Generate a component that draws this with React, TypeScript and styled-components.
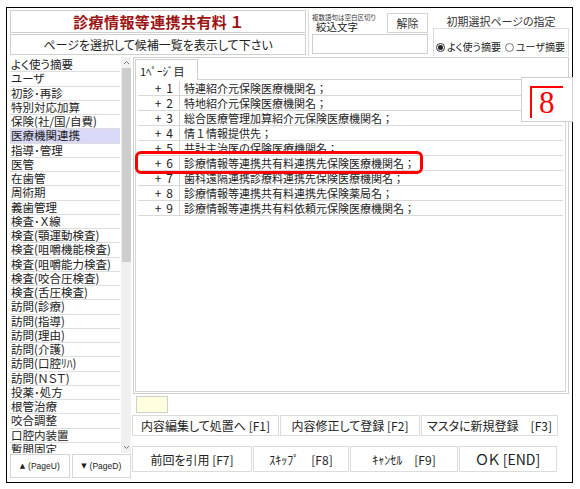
import React from 'react';
import styled, { createGlobalStyle } from 'styled-components';

const GlobalStyle = createGlobalStyle`
  html, body { margin: 0; padding: 0; background: #fff; }
  body {
    font-family: "Noto Sans CJK JP", "Noto Sans", sans-serif;
    color: #222;
    font-feature-settings: "palt";
  }
  * { box-sizing: border-box; }
`;

const Window = styled.div`
  margin: 7px 0 0 6px;
  width: 567px;
  height: 476px;
  border: 1px solid #000;
  padding: 2px 3px 0 3px;
  display: flex;
  flex-direction: column;
  gap: 1px;
`;

const TopArea = styled.div`
  display: flex;
  height: 46px;
`;

const TitleCol = styled.div`
  width: 296px;
  display: flex;
  flex-direction: column;
  gap: 1px;
`;

const TitleBox = styled.div`
  height: 23px;
  border: 1px solid #cfcfcf;
  display: flex;
  align-items: center;
  justify-content: center;
  font-size: 15px;
  font-weight: bold;
  color: #9c1414;
  letter-spacing: 0.4px;
`;

const SubBox = styled.div`
  height: 21px;
  border: 1px solid #cfcfcf;
  display: flex;
  align-items: center;
  justify-content: center;
  font-size: 12px;
`;

const FilterGroup = styled.div`
  width: 120px;
  margin-left: 2px;
  display: flex;
  flex-direction: column;
  gap: 1px;
  border-left: 1px solid #dcdcdc;
  padding-top: 3px;
`;

const FilterHead = styled.div`
  display: flex;
  height: 20px;
`;

const FilterLabels = styled.div`
  flex: 1;
  display: flex;
  flex-direction: column;
  padding-left: 3px;
  overflow: hidden;
`;

const Hint = styled.span`
  font-size: 6.5px;
  line-height: 8px;
  color: #333;
  white-space: nowrap;
`;

const FilterLabel = styled.span`
  font-size: 10.5px;
  line-height: 12px;
  padding-left: 4px;
  white-space: nowrap;
`;

const ClearButton = styled.div`
  width: 41px;
  border: 1px solid #d4d4d4;
  display: flex;
  align-items: center;
  justify-content: center;
  font-size: 11px;
  color: #333;
`;

const FilterInput = styled.div`
  height: 20px;
  margin-left: 3px;
  border: 1px solid #cfcfcf;
  background: #fff;
`;

const InitCol = styled.div`
  flex: 1;
  margin-left: 5px;
  display: flex;
  flex-direction: column;
`;

const InitLabel = styled.div`
  height: 18px;
  padding-top: 5px;
  text-align: center;
  font-size: 11px;
  line-height: 12px;
  color: #333;
`;

const RadioBox = styled.div`
  flex: 1;
  border: 1px solid #dcdcdc;
  border-bottom: none;
  display: flex;
  align-items: flex-end;
  padding: 0 0 3px 2px;
  gap: 4px;
  font-size: 10px;
  line-height: 12px;
  white-space: nowrap;
`;

const RadioItem = styled.label`
  display: flex;
  align-items: center;
  gap: 2px;
`;

const RadioDot = styled.span<{ $on?: boolean }>`
  flex: 0 0 9px;
  width: 9px;
  height: 9px;
  border-radius: 50%;
  border: 1px solid ${p => (p.$on ? '#333' : '#777')};
  display: inline-flex;
  align-items: center;
  justify-content: center;
  &::after {
    content: '';
    width: 5px;
    height: 5px;
    border-radius: 50%;
    background: ${p => (p.$on ? '#222' : 'transparent')};
  }
`;

const Main = styled.div`
  flex: 1;
  display: flex;
  gap: 2px;
`;

const LeftCol = styled.div`
  width: 121px;
  display: flex;
  flex-direction: column;
`;

const ListBox = styled.div`
  height: 396px;
  display: flex;
  overflow: hidden;
`;

const Items = styled.div`
  width: 110px;
  display: flex;
  flex-direction: column;
  padding-top: 1px;
`;

const Item = styled.div<{ $selected?: boolean }>`
  flex: 0 0 14.26px;
  height: 14.26px;
  line-height: 13px;
  font-size: 11.5px;
  padding-left: 1px;
  white-space: nowrap;
  border-bottom: 1px solid #dedede;
  background: ${p => (p.$selected ? '#d9d9f7' : '#fff')};
`;

const ScrollBar = styled.div`
  width: 10px;
  margin-left: 1px;
  background: #f0f0f0;
  display: flex;
  flex-direction: column;
  align-items: center;
`;

const ScrollArrow = styled.div`
  height: 11px;
  display: flex;
  align-items: center;
  justify-content: center;
`;

const Thumb = styled.div`
  width: 9px;
  height: 194px;
  background: #cdcdcd;
`;

const ScrollRest = styled.div`
  flex: 1;
`;

const PageRow = styled.div`
  margin-top: 1px;
  height: 24px;
  display: flex;
  gap: 2px;
`;

const PageButton = styled.div`
  flex: 1;
  min-width: 0;
  border: 1px solid #d8d8d8;
  display: flex;
  align-items: center;
  justify-content: center;
  font-family: "Liberation Sans", "DejaVu Sans", sans-serif;
  font-size: 8.5px;
  color: #222;
  gap: 3px;
  white-space: nowrap;
`;

const Arrow = styled.span`
  font-family: "DejaVu Sans", sans-serif;
  font-size: 7px;
`;

const RightCol = styled.div`
  flex: 1;
  display: flex;
  flex-direction: column;
`;

const TabFrame = styled.div`
  position: relative;
  height: 337px;
  border: 1px solid #cfcfcf;
  padding: 0 2px 1px 1px;
  display: flex;
  flex-direction: column;
`;

const TabStrip = styled.div`
  height: 21px;
  display: flex;
  align-items: flex-end;
`;

const Tab = styled.div`
  width: 63px;
  height: 21px;
  border: 1px solid #cfcfcf;
  border-bottom: none;
  background: #fff;
  font-size: 11px;
  padding: 3px 0 0 4px;
  margin-bottom: -1px;
  position: relative;
  z-index: 1;
`;

const Panel = styled.div`
  position: relative;
  flex: 1;
  border: 1px solid #d4d4d4;
  padding: 1px 2px 0 2px;
`;

const Row = styled.div`
  height: 15px;
  display: flex;
  border-bottom: 1px solid #d9d9d9;
  font-size: 11px;
  line-height: 14px;
`;

const RowNo = styled.div`
  width: 42px;
  border-right: 1px solid #d4d4d4;
  display: flex;
  justify-content: flex-end;
  gap: 5px;
  padding-right: 6px;
  font-size: 12px;
  font-feature-settings: normal;
`;

const RowText = styled.div`
  padding-left: 4px;
  white-space: nowrap;
  font-feature-settings: normal;
`;

const Highlight = styled.div`
  position: absolute;
  left: -1px;
  top: 71px;
  width: 288px;
  height: 23px;
  border: 3px solid #f00;
  border-radius: 6px;
`;

const PageBadge = styled.div`
  position: absolute;
  left: 387px;
  top: 19px;
  width: 52px;
  height: 45px;
  background: #fff;
  border: 1px solid #cfcfcf;
  padding: 8px 0 0 8px;
`;

const BadgeMark = styled.div`
  width: 33px;
  height: 32px;
  border-left: 2px solid #f00;
  border-top: 2px solid #f00;
  color: #f00;
  font-family: "Liberation Serif", serif;
  font-size: 31px;
  line-height: 30px;
  padding-left: 7px;
`;

const MemoRow = styled.div`
  height: 20px;
  padding: 2px 0 1px 3px;
`;

const MemoBox = styled.div`
  width: 32px;
  height: 17px;
  background: #ffffe0;
  border: 1px solid #cfcfcf;
`;

const ButtonRow = styled.div<{ $cols: string; $h: number; $top: number }>`
  display: grid;
  grid-template-columns: ${p => p.$cols};
  gap: 1px;
  height: ${p => p.$h}px;
  margin-top: ${p => p.$top}px;
  margin-left: -1px;
`;

const FnButton = styled.div<{ $big?: boolean }>`
  border: 1px solid #dcdcdc;
  background: #fff;
  display: flex;
  align-items: center;
  justify-content: center;
  font-size: ${p => (p.$big ? '14px' : '12px')};
  color: #222;
  white-space: pre;
`;

const Chevron = ({ up }: { up?: boolean }) => (
  <svg width="7" height="5" viewBox="0 0 7 5">
    <path
      d={up ? 'M1 4 L3.5 1.5 L6 4' : 'M1 1 L3.5 3.5 L6 1'}
      fill="none"
      stroke="#777"
      strokeWidth="1"
    />
  </svg>
);

const categories = [
  'よく使う摘要', 'ユーザ', '初診･再診', '特別対応加算', '保険(社/国/自費)',
  '医療機関連携', '指導･管理', '医管', '在歯管', '周術期', '義歯管理',
  '検査･Ｘ線', '検査(顎運動検査)', '検査(咀嚼機能検査)', '検査(咀嚼能力検査)',
  '検査(咬合圧検査)', '検査(舌圧検査)', '訪問(診療)', '訪問(指導)', '訪問(理由)',
  '訪問(介護)', '訪問(口腔ﾘﾊ)', '訪問(ＮＳＴ)', '投薬･処方', '根管治療',
  '咬合調整', '口腔内装置', '暫間固定',
];

const rows = [
  '特連紹介元保険医療機関名；',
  '特地紹介元保険医療機関名；',
  '総合医療管理加算紹介元保険医療機関名；',
  '情１情報提供先；',
  '共計主治医の保険医療機関名；',
  '診療情報等連携共有料連携先保険医療機関名；',
  '歯科遠隔連携診療料連携先保険医療機関名；',
  '診療情報等連携共有料連携先保険薬局名；',
  '診療情報等連携共有料依頼元保険医療機関名；',
];

const App: React.FC = () => (
  <>
    <GlobalStyle />
    <Window>
      <TopArea>
        <TitleCol>
          <TitleBox>診療情報等連携共有料 １</TitleBox>
          <SubBox>ページを選択して候補一覧を表示して下さい</SubBox>
        </TitleCol>
        <FilterGroup>
          <FilterHead>
            <FilterLabels>
              <Hint>複数語句は空白区切り</Hint>
              <FilterLabel>絞込文字</FilterLabel>
            </FilterLabels>
            <ClearButton>解除</ClearButton>
          </FilterHead>
          <FilterInput />
        </FilterGroup>
        <InitCol>
          <InitLabel>初期選択ページの指定</InitLabel>
          <RadioBox>
            <RadioItem><RadioDot $on />よく使う摘要</RadioItem>
            <RadioItem><RadioDot />ユーザ摘要</RadioItem>
          </RadioBox>
        </InitCol>
      </TopArea>

      <Main>
        <LeftCol>
          <ListBox>
            <Items>
              {categories.map(c => (
                <Item key={c} $selected={c === '医療機関連携'}>{c}</Item>
              ))}
            </Items>
            <ScrollBar>
              <ScrollArrow><Chevron up /></ScrollArrow>
              <Thumb />
              <ScrollRest />
              <ScrollArrow><Chevron /></ScrollArrow>
            </ScrollBar>
          </ListBox>
          <PageRow>
            <PageButton><Arrow>▲</Arrow>(PageU)</PageButton>
            <PageButton><Arrow>▼</Arrow>(PageD)</PageButton>
          </PageRow>
        </LeftCol>

        <RightCol>
          <TabFrame>
            <TabStrip>
              <Tab>1ﾍﾟｰｼﾞ目</Tab>
            </TabStrip>
            <Panel>
              {rows.map((r, i) => (
                <Row key={i}>
                  <RowNo><span>+</span><span>{i + 1}</span></RowNo>
                  <RowText>{r}</RowText>
                </Row>
              ))}
              <Highlight />
            </Panel>
            <PageBadge>
              <BadgeMark>8</BadgeMark>
            </PageBadge>
          </TabFrame>
          <MemoRow>
            <MemoBox />
          </MemoRow>
          <ButtonRow $cols="147px 140px 137px" $h={21} $top={1}>
            <FnButton>内容編集して処置へ [F1]</FnButton>
            <FnButton>内容修正して登録 [F2]</FnButton>
            <FnButton>{'マスタに新規登録　[F3]'}</FnButton>
          </ButtonRow>
          <ButtonRow $cols="120px 96px 108px 98px" $h={26} $top={10}>
            <FnButton>前回を引用 [F7]</FnButton>
            <FnButton>{'ｽｷｯﾌﾟ　[F8]'}</FnButton>
            <FnButton>{'ｷｬﾝｾﾙ　[F9]'}</FnButton>
            <FnButton $big>ＯＫ [END]</FnButton>
          </ButtonRow>
        </RightCol>
      </Main>
    </Window>
  </>
);

export default App;
